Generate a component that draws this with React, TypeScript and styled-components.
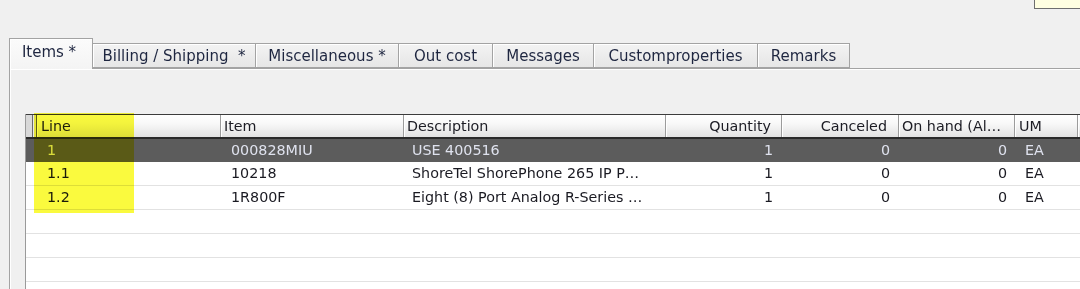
import React from 'react';
import styled, { createGlobalStyle } from 'styled-components';

type Align = 'left' | 'right';

interface Column {
  key: string;
  title: string;
  width: number;
  align: Align;
  headerAlign: Align;
  pad: number;
  headerPad: number;
}

const columns: Column[] = [
  { key: 'line', title: 'Line', width: 184, align: 'left', headerAlign: 'left', pad: 10, headerPad: 4 },
  { key: 'item', title: 'Item', width: 183, align: 'left', headerAlign: 'left', pad: 10, headerPad: 3 },
  { key: 'desc', title: 'Description', width: 262, align: 'left', headerAlign: 'left', pad: 8, headerPad: 3 },
  { key: 'qty', title: 'Quantity', width: 116, align: 'right', headerAlign: 'right', pad: 9, headerPad: 10 },
  { key: 'canceled', title: 'Canceled', width: 117, align: 'right', headerAlign: 'right', pad: 9, headerPad: 11 },
  { key: 'onhand', title: 'On hand (Al…', width: 116, align: 'right', headerAlign: 'left', pad: 8, headerPad: 3 },
  { key: 'um', title: 'UM', width: 63, align: 'left', headerAlign: 'left', pad: 10, headerPad: 4 },
  { key: 'extra', title: '', width: 120, align: 'left', headerAlign: 'left', pad: 4, headerPad: 4 },
];

const rows: Record<string, string>[] = [
  { line: '1', item: '000828MIU', desc: 'USE 400516', qty: '1', canceled: '0', onhand: '0', um: 'EA' },
  { line: '1.1', item: '10218', desc: 'ShoreTel ShorePhone 265 IP P…', qty: '1', canceled: '0', onhand: '0', um: 'EA' },
  { line: '1.2', item: '1R800F', desc: 'Eight (8) Port Analog R-Series …', qty: '1', canceled: '0', onhand: '0', um: 'EA' },
  {}, {}, {}, {},
];

const tabs = [
  { label: 'Items *', width: 84, active: true },
  { label: 'Billing / Shipping  *', width: 164 },
  { label: 'Miscellaneous *', width: 144 },
  { label: 'Out cost', width: 95 },
  { label: 'Messages', width: 102 },
  { label: 'Customproperties', width: 165 },
  { label: 'Remarks', width: 93 },
];

const template = `11px ${columns.map(c => `${c.width}px`).join(' ')}`;

const GlobalStyle = createGlobalStyle`
  html, body {
    margin: 0;
    padding: 0;
    background: #f0f0f0;
  }
  body {
    font-family: "DejaVu Sans", Tahoma, sans-serif;
    color: #1c1c24;
  }
`;

const Page = styled.div`
  position: relative;
  width: 1080px;
  height: 289px;
  overflow: hidden;
  background: #f0f0f0;
  padding-top: 38px;
  box-sizing: border-box;
`;

const Tooltip = styled.div`
  position: absolute;
  left: 1034px;
  top: -1px;
  width: 60px;
  height: 8px;
  background: #ffffe1;
  border: 1px solid #6e6e6e;
`;

const TabStrip = styled.div`
  display: flex;
  align-items: flex-end;
  height: 30px;
  padding-left: 9px;
  position: relative;
  z-index: 1;
`;

const Tab = styled.div<{ $active?: boolean; $width: number }>`
  box-sizing: border-box;
  width: ${p => p.$width}px;
  height: ${p => (p.$active ? 31 : 25)}px;
  margin-bottom: ${p => (p.$active ? -1 : 0)}px;
  margin-left: ${p => (p.$active ? 0 : -1)}px;
  display: flex;
  align-items: center;
  justify-content: center;
  padding: ${p => (p.$active ? '0 4px 4px 0' : '0')};
  font-size: 15px;
  white-space: pre;
  color: #1e2640;
  border: 1px solid #a3a3a3;
  border-bottom: ${p => (p.$active ? 'none' : '1px solid #a3a3a3')};
  background: ${p =>
    p.$active
      ? 'linear-gradient(#fbfbfb, #f4f4f4)'
      : 'linear-gradient(#f3f3f3, #e6e6e6)'};
  box-shadow: inset 1px 1px 0 #ffffff;
  &:first-child {
    margin-left: 0;
  }
`;

const Panel = styled.div`
  margin-left: 9px;
  height: 221px;
  border-left: 1px solid #a3a3a3;
  border-top: 1px solid #a3a3a3;
  box-shadow: inset 1px 1px 0 #ffffff;
  padding: 45px 0 0 15px;
  box-sizing: border-box;
`;

const GridWrap = styled.div`
  position: relative;
  background: #ffffff;
  border-left: 1px solid #9a9a9a;
  width: 1200px;
  height: 200px;
  font-size: 14.3px;
`;

const HeaderRow = styled.div`
  display: grid;
  grid-template-columns: ${template};
  border-top: 1px solid #3c3c3c;
  border-bottom: 2px solid #2a2a2a;
  height: 25px;
  box-sizing: border-box;
`;

const RowHeaderCell = styled.div`
  box-sizing: border-box;
  border-right: 1px solid #5a5a5a;
  background: linear-gradient(90deg, #d8d8d8 0 6px, #6a6a6a 6px 7px, #e8e8e8 7px);
`;

const HeaderCell = styled.div<{ $align: Align; $pad: number }>`
  box-sizing: border-box;
  line-height: 22px;
  padding: 0 ${p => p.$pad}px;
  text-align: ${p => p.$align};
  white-space: nowrap;
  overflow: hidden;
  color: #1c1c24;
  background: linear-gradient(#ffffff 0%, #f8f8f8 40%, #e2e2e2 100%);
  border-right: 1px solid #9c9c9c;
  box-shadow: inset 1px 0 0 #ffffff;
`;

const Row = styled.div<{ $selected?: boolean }>`
  display: grid;
  grid-template-columns: ${template};
  height: ${p => (p.$selected ? 23 : 24)}px;
  box-sizing: border-box;
  background: ${p => (p.$selected ? '#5c5c5c' : '#ffffff')};
  color: ${p => (p.$selected ? '#dfe2ee' : '#1a1a22')};
  border-bottom: 1px solid ${p => (p.$selected ? '#5c5c5c' : '#e2e2e2')};
`;

const Cell = styled.div<{ $align: Align; $pad: number }>`
  line-height: 22px;
  padding: 0 ${p => p.$pad}px;
  text-align: ${p => p.$align};
  white-space: nowrap;
  overflow: hidden;
`;

const Highlighter = styled.div`
  position: absolute;
  left: 8px;
  top: -1px;
  width: 100px;
  height: 100px;
  background: #fafa3e;
  mix-blend-mode: multiply;
  pointer-events: none;
`;

const App: React.FC = () => (
  <>
    <GlobalStyle />
    <Page>
      <Tooltip />
      <TabStrip>
        {tabs.map(t => (
          <Tab key={t.label} $active={t.active} $width={t.width}>
            {t.label}
          </Tab>
        ))}
      </TabStrip>
      <Panel>
        <GridWrap>
          <HeaderRow>
            <RowHeaderCell />
            {columns.map(c => (
              <HeaderCell key={c.key} $align={c.headerAlign} $pad={c.headerPad}>
                {c.title}
              </HeaderCell>
            ))}
          </HeaderRow>
          {rows.map((r, i) => (
            <Row key={i} $selected={i === 0}>
              <div />
              {columns.map(c => (
                <Cell key={c.key} $align={c.align} $pad={c.pad}>
                  {r[c.key] ?? ''}
                </Cell>
              ))}
            </Row>
          ))}
          <Highlighter />
        </GridWrap>
      </Panel>
    </Page>
  </>
);

export default App;
